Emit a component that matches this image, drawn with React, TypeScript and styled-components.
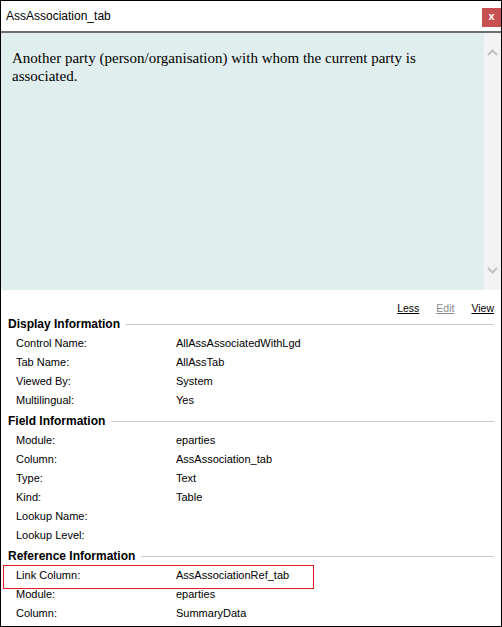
import styled, { createGlobalStyle } from 'styled-components';

const GlobalStyle = createGlobalStyle`
  html, body {
    margin: 0;
    padding: 0;
    background: #fff;
  }
  * {
    box-sizing: border-box;
  }
`;

interface IInfoRow {
  label: string;
  value: string;
  marked?: boolean;
}

interface ISection {
  title: string;
  rows: IInfoRow[];
}

const sections: ISection[] = [
  {
    title: 'Display Information',
    rows: [
      { label: 'Control Name:', value: 'AllAssAssociatedWithLgd' },
      { label: 'Tab Name:', value: 'AllAssTab' },
      { label: 'Viewed By:', value: 'System' },
      { label: 'Multilingual:', value: 'Yes' },
    ],
  },
  {
    title: 'Field Information',
    rows: [
      { label: 'Module:', value: 'eparties' },
      { label: 'Column:', value: 'AssAssociation_tab' },
      { label: 'Type:', value: 'Text' },
      { label: 'Kind:', value: 'Table' },
      { label: 'Lookup Name:', value: '' },
      { label: 'Lookup Level:', value: '' },
    ],
  },
  {
    title: 'Reference Information',
    rows: [
      { label: 'Link Column:', value: 'AssAssociationRef_tab', marked: true },
      { label: 'Module:', value: 'eparties' },
      { label: 'Column:', value: 'SummaryData' },
    ],
  },
];

const Chevron = ({ up }: { up?: boolean }) => (
  <svg width='11' height='7' viewBox='0 0 11 7'>
    <path
      d={up ? 'M1 6 L5.5 1.5 L10 6' : 'M1 1 L5.5 5.5 L10 1'}
      fill='none'
      stroke='#c0c0c0'
      strokeWidth='2'
    />
  </svg>
);

const App = () => {
  return (
    <>
      <GlobalStyle />
      <StyledWindow>
        <StyledTitleBar>
          <StyledTitle>AssAssociation_tab</StyledTitle>
          <StyledCloseButton>x</StyledCloseButton>
        </StyledTitleBar>
        <StyledDescPanel>
          <StyledDescText>
            Another party (person/organisation) with whom the current party is associated.
          </StyledDescText>
          <StyledScrollBar>
            <Chevron up />
            <Chevron />
          </StyledScrollBar>
        </StyledDescPanel>
        <StyledActionRow>
          <StyledAction>Less</StyledAction>
          <StyledAction disabled>Edit</StyledAction>
          <StyledAction>View</StyledAction>
        </StyledActionRow>
        {sections.map((section, i) => (
          <StyledSection key={section.title} first={i === 0}>
            <StyledSectionHeader>{section.title}</StyledSectionHeader>
            {section.rows.map((row) => (
              <StyledInfoRow key={section.title + row.label}>
                <span>{row.label}</span>
                <span>{row.value}</span>
                {row.marked && <StyledMarker />}
              </StyledInfoRow>
            ))}
          </StyledSection>
        ))}
      </StyledWindow>
    </>
  );
};

const StyledWindow = styled.div`
  width: 502px;
  height: 627px;
  border: 1px solid #000;
  background: #fff;
  display: flex;
  flex-direction: column;
  font-family: 'Liberation Sans', Arial, sans-serif;
  color: #000;
`;

const StyledTitleBar = styled.div`
  height: 32px;
  display: flex;
  justify-content: space-between;
  align-items: flex-start;
  border-bottom: 2px solid #6e6e6e;
  padding-left: 5px;
`;

const StyledTitle = styled.span`
  font-size: 12px;
  line-height: 30px;
`;

const StyledCloseButton = styled.div`
  margin-top: 7px;
  width: 19px;
  height: 19px;
  background: #c75050;
  color: #fff;
  font-size: 11px;
  font-weight: bold;
  line-height: 17px;
  text-align: center;
`;

const StyledDescPanel = styled.div`
  height: 257px;
  display: flex;
`;

const StyledDescText = styled.div`
  flex: 1;
  background: #e1eeee;
  padding: 16px 40px 0 11px;
  font-family: 'Liberation Serif', 'Times New Roman', serif;
  font-size: 15px;
  line-height: 18px;
`;

const StyledScrollBar = styled.div`
  width: 17px;
  background: #f3f3f3;
  display: flex;
  flex-direction: column;
  justify-content: space-between;
  align-items: center;
  padding: 16px 0 16px 0;
`;

const StyledActionRow = styled.div`
  display: flex;
  justify-content: flex-end;
  gap: 17px;
  padding: 12px 7px 0 0;
  font-size: 10.5px;
  line-height: 13px;
`;

const StyledAction = styled.span<{ disabled?: boolean }>`
  text-decoration: underline;
  color: ${(p) => (p.disabled ? '#8a8a8a' : '#000')};
`;

const StyledSection = styled.div<{ first?: boolean }>`
  margin-top: ${(p) => (p.first ? '0' : '2px')};
`;

const StyledSectionHeader = styled.div`
  display: flex;
  align-items: center;
  padding: 0 7px 0 7px;
  font-size: 12px;
  font-weight: bold;
  line-height: 19px;

  &::after {
    content: '';
    flex: 1;
    height: 1px;
    margin-left: 6px;
    background: #c8c8c8;
  }
`;

const StyledInfoRow = styled.div`
  position: relative;
  display: grid;
  grid-template-columns: 160px 1fr;
  padding-left: 15px;
  font-size: 11px;
  line-height: 19px;
`;

const StyledMarker = styled.div`
  position: absolute;
  left: 2px;
  top: -1px;
  width: 311px;
  height: 24px;
  border: 1px solid #e31b23;
`;

export default App;
